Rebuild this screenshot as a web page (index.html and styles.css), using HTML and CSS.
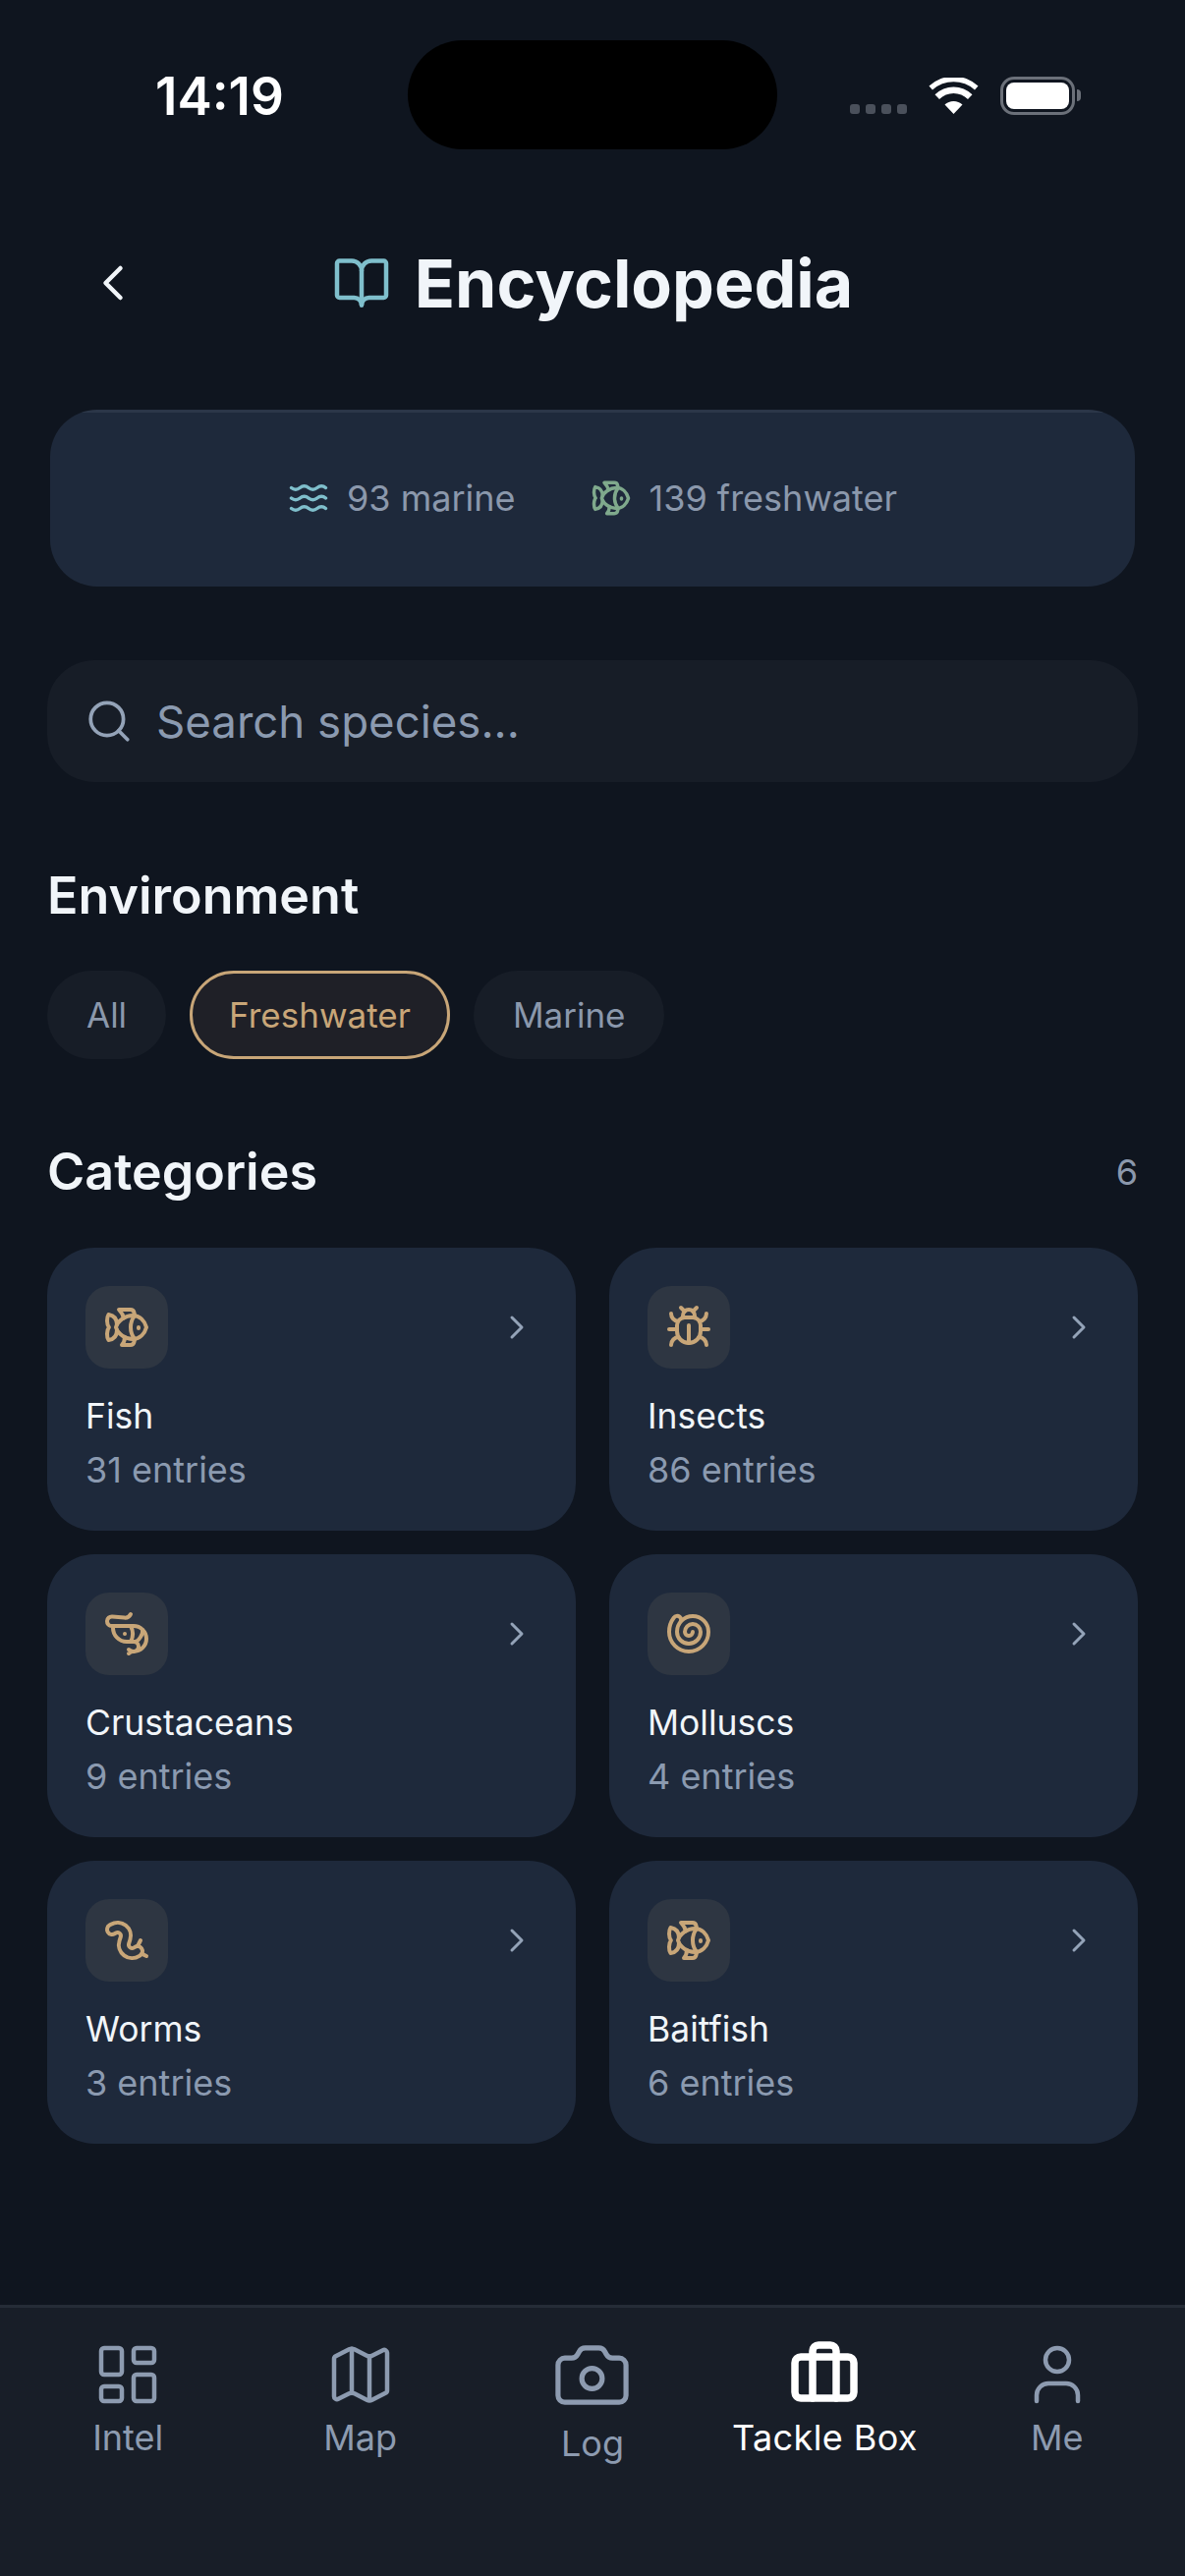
FILE: index.html
```html
<!DOCTYPE html>
<html lang="en">
<head>
    <meta charset="UTF-8">
    <meta name="viewport" content="width=device-width, initial-scale=1.0">
    <title>Encyclopedia</title>
    <link rel="stylesheet" href="styles.css">
</head>
<body>

<svg class="sprites" width="0" height="0">
    <symbol id="i-fish" viewBox="0 0 24 24">
        <path d="M6.5 12c.94-3.46 4.94-6 8.5-6 3.56 0 6.06 2.54 7 6-.94 3.47-3.44 6-7 6s-7.56-2.53-8.5-6Z"/>
        <path d="M18 12v.5"/>
        <path d="M16 17.93a9.77 9.77 0 0 1 0-11.86"/>
        <path d="M7 10.67C7 8 5.58 5.97 2.73 5.5c-1 1.5-1 5 .23 6.5-1.24 1.5-1.24 5-.23 6.5C5.58 18.03 7 16 7 13.33"/>
        <path d="M10.46 7.26C10.2 5.88 9.17 4.24 8 3h5.8a2 2 0 0 1 1.98 1.67l.23 1.4"/>
        <path d="m16.01 17.93-.23 1.4A2 2 0 0 1 13.8 21H9.5a5.96 5.96 0 0 0 1.49-3.98"/>
    </symbol>
    <symbol id="i-bug" viewBox="0 0 24 24">
        <path d="m8 2 1.88 1.88"/>
        <path d="M14.12 3.88 16 2"/>
        <path d="M9 7.13v-1a3.003 3.003 0 1 1 6 0v1"/>
        <path d="M12 20c-3.3 0-6-2.7-6-6v-3a4 4 0 0 1 4-4h4a4 4 0 0 1 4 4v3c0 3.3-2.7 6-6 6"/>
        <path d="M12 20v-9"/>
        <path d="M6.53 9C4.6 8.8 3 7.1 3 5"/>
        <path d="M6 13H2"/>
        <path d="M3 21c0-2.1 1.7-3.9 3.8-4"/>
        <path d="M20.97 5c0 2.1-1.6 3.8-3.5 4"/>
        <path d="M22 13h-4"/>
        <path d="M17.2 17c2.1.1 3.8 1.9 3.8 4"/>
    </symbol>
    <symbol id="i-shrimp" viewBox="0 0 24 24">
        <path d="M11 12h.01"/>
        <path d="M13 22c.5-.5 1.12-1 2.5-1-1.38 0-2-.5-2.5-1"/>
        <path d="M14 2a3.28 3.28 0 0 1-3.227 1.798l-6.17-.561A2.387 2.387 0 1 0 4.387 8H15.5a1 1 0 0 1 0 13 1 1 0 0 0 0-5H12a7 7 0 0 1-7-7V8"/>
        <path d="M14 8a8.5 8.5 0 0 1 0 8"/>
        <path d="M16 16c2 0 4.5-4 4-6"/>
    </symbol>
    <symbol id="i-shell" viewBox="0 0 24 24">
        <path d="M14 11a2 2 0 1 1-4 0 4 4 0 0 1 8 0 6 6 0 0 1-12 0 8 8 0 0 1 16 0 10 10 0 1 1-20 0 11.93 11.93 0 0 1 2.42-7.22 2 2 0 1 1 3.16 2.44"/>
    </symbol>
    <symbol id="i-worm" viewBox="0 0 24 24">
        <path d="m19 12-1.5 3"/>
        <path d="M19.63 18.81 22 20"/>
        <path d="M6.47 8.23a1.68 1.68 0 0 1 2.44 1.93l-.64 2.08a6.76 6.76 0 0 0 10.16 7.67l.42-.27a1 1 0 1 0-2.73-4.21l-.42.27a1.76 1.76 0 0 1-2.63-1.99l.64-2.08A6.66 6.66 0 0 0 3.94 3.9l-.7.4a1 1 0 1 0 2.55 4.34z"/>
    </symbol>
    <symbol id="i-chevron" viewBox="0 0 24 24">
        <path d="m9 18 6-6-6-6"/>
    </symbol>
</svg>

<div class="phone">
    <div class="status-bar">
        <div class="status-time">14:19</div>
        <div class="island"></div>
        <div class="status-icons">
            <div class="signal"><span></span><span></span><span></span><span></span></div>
            <svg class="wifi" viewBox="0 0 50 37">
                <path d="M25 37 16 27.500a13 13 0 0 1 18 0Z"/>
                <path d="M10.500 22 6 17.200a27 27 0 0 1 38 0L39.500 22a20.500 20.500 0 0 0-29 0Z"/>
                <path d="M3.500 12.500 0 8.500a37 37 0 0 1 50 0l-3.500 4a32 32 0 0 0-43 0Z"/>
            </svg>
            <div class="battery"><div class="battery-fill"></div></div>
            <div class="battery-cap"></div>
        </div>
    </div>

    <div class="content">
        <header class="page-header">
            <svg class="icon back" viewBox="0 0 24 24"><path d="m15 18-6-6 6-6"/></svg>
            <div class="page-title">
                <svg class="icon title-icon" viewBox="0 0 24 24">
                    <path d="M12 7v14"/>
                    <path d="M3 18a1 1 0 0 1-1-1V4a1 1 0 0 1 1-1h5a4 4 0 0 1 4 4 4 4 0 0 1 4-4h5a1 1 0 0 1 1 1v13a1 1 0 0 1-1 1h-6a3 3 0 0 0-3 3 3 3 0 0 0-3-3z"/>
                </svg>
                <h1>Encyclopedia</h1>
            </div>
        </header>

        <div class="stats-card">
            <div class="stat">
                <svg class="icon stat-icon marine" viewBox="0 0 24 24">
                    <path d="M2 6c.6.5 1.200 1 2.500 1C7 7 7 5 9.500 5c2.600 0 2.400 2 5 2 2.500 0 2.500-2 5-2 1.300 0 1.900.5 2.500 1"/>
                    <path d="M2 12c.6.5 1.200 1 2.500 1 2.500 0 2.500-2 5-2 2.600 0 2.400 2 5 2 2.500 0 2.500-2 5-2 1.300 0 1.900.5 2.500 1"/>
                    <path d="M2 18c.6.5 1.200 1 2.500 1 2.500 0 2.500-2 5-2 2.600 0 2.400 2 5 2 2.500 0 2.500-2 5-2 1.300 0 1.900.5 2.500 1"/>
                </svg>
                <span>93 marine</span>
            </div>
            <div class="stat">
                <svg class="icon stat-icon fresh"><use href="#i-fish"/></svg>
                <span>139 freshwater</span>
            </div>
        </div>

        <div class="search-box">
            <svg class="icon search-icon" viewBox="0 0 24 24">
                <circle cx="11" cy="11" r="8"/>
                <path d="m21 21-4.300-4.300"/>
            </svg>
            <span>Search species...</span>
        </div>

        <h2 class="section-title env-title">Environment</h2>
        <div class="pills">
            <div class="pill">All</div>
            <div class="pill active">Freshwater</div>
            <div class="pill">Marine</div>
        </div>

        <div class="section-head">
            <h2 class="section-title">Categories</h2>
            <span class="section-count">6</span>
        </div>

        <div class="cat-grid">
            <div class="cat-card">
                <div class="cat-top">
                    <div class="cat-tile"><svg class="icon cat-icon"><use href="#i-fish"/></svg></div>
                    <svg class="icon cat-chevron"><use href="#i-chevron"/></svg>
                </div>
                <div class="cat-name">Fish</div>
                <div class="cat-count">31 entries</div>
            </div>
            <div class="cat-card">
                <div class="cat-top">
                    <div class="cat-tile"><svg class="icon cat-icon"><use href="#i-bug"/></svg></div>
                    <svg class="icon cat-chevron"><use href="#i-chevron"/></svg>
                </div>
                <div class="cat-name">Insects</div>
                <div class="cat-count">86 entries</div>
            </div>
            <div class="cat-card">
                <div class="cat-top">
                    <div class="cat-tile"><svg class="icon cat-icon"><use href="#i-shrimp"/></svg></div>
                    <svg class="icon cat-chevron"><use href="#i-chevron"/></svg>
                </div>
                <div class="cat-name">Crustaceans</div>
                <div class="cat-count">9 entries</div>
            </div>
            <div class="cat-card">
                <div class="cat-top">
                    <div class="cat-tile"><svg class="icon cat-icon"><use href="#i-shell"/></svg></div>
                    <svg class="icon cat-chevron"><use href="#i-chevron"/></svg>
                </div>
                <div class="cat-name">Molluscs</div>
                <div class="cat-count">4 entries</div>
            </div>
            <div class="cat-card">
                <div class="cat-top">
                    <div class="cat-tile"><svg class="icon cat-icon"><use href="#i-worm"/></svg></div>
                    <svg class="icon cat-chevron"><use href="#i-chevron"/></svg>
                </div>
                <div class="cat-name">Worms</div>
                <div class="cat-count">3 entries</div>
            </div>
            <div class="cat-card">
                <div class="cat-top">
                    <div class="cat-tile"><svg class="icon cat-icon"><use href="#i-fish"/></svg></div>
                    <svg class="icon cat-chevron"><use href="#i-chevron"/></svg>
                </div>
                <div class="cat-name">Baitfish</div>
                <div class="cat-count">6 entries</div>
            </div>
        </div>
    </div>

    <nav class="tab-bar">
        <div class="tab">
            <svg class="icon tab-icon" viewBox="0 0 24 24">
                <rect x="3" y="3" width="7" height="9" rx="1"/>
                <rect x="14" y="3" width="7" height="5" rx="1"/>
                <rect x="14" y="12" width="7" height="9" rx="1"/>
                <rect x="3" y="16" width="7" height="5" rx="1"/>
            </svg>
            <span>Intel</span>
        </div>
        <div class="tab">
            <svg class="icon tab-icon" viewBox="0 0 24 24">
                <path d="M14.106 5.553a2 2 0 0 0 1.788 0l3.659-1.830A1 1 0 0 1 21 4.619v12.764a1 1 0 0 1-.553.894l-4.553 2.277a2 2 0 0 1-1.788 0l-4.212-2.106a2 2 0 0 0-1.788 0l-3.659 1.830A1 1 0 0 1 3 19.381V6.618a1 1 0 0 1 .553-.894l4.553-2.277a2 2 0 0 1 1.788 0z"/>
                <path d="M15 5.764v15"/>
                <path d="M9 3.236v15"/>
            </svg>
            <span>Map</span>
        </div>
        <div class="tab">
            <svg class="icon tab-icon tab-icon-big" viewBox="0 0 24 24">
                <path d="M13.997 4a2 2 0 0 1 1.760 1.050l.486.9A2 2 0 0 0 18.003 7H20a2 2 0 0 1 2 2v9a2 2 0 0 1-2 2H4a2 2 0 0 1-2-2V9a2 2 0 0 1 2-2h1.997a2 2 0 0 0 1.759-1.048l.489-.904A2 2 0 0 1 10.004 4z"/>
                <circle cx="12" cy="13" r="3"/>
            </svg>
            <span>Log</span>
        </div>
        <div class="tab active">
            <svg class="icon tab-icon" viewBox="0 0 24 24">
                <path d="M16 20V4a2 2 0 0 0-2-2h-4a2 2 0 0 0-2 2v16"/>
                <rect x="2" y="6" width="20" height="14" rx="2"/>
            </svg>
            <span>Tackle Box</span>
        </div>
        <div class="tab">
            <svg class="icon tab-icon" viewBox="0 0 24 24">
                <path d="M19 21v-2a4 4 0 0 0-4-4H9a4 4 0 0 0-4 4v2"/>
                <circle cx="12" cy="7" r="4"/>
            </svg>
            <span>Me</span>
        </div>
    </nav>
</div>

</body>
</html>
```

FILE: styles.css
```css
* {
    box-sizing: border-box;
}

body {
    margin: 0;
    padding: 0;
    background-color: #0f151f;
    font-family: Inter, "Noto Sans", sans-serif;
    color: #f1f5f9;
}

.sprites {
    display: block;
    height: 0;
}

.phone {
    width: 1206px;
    height: 2622px;
    display: flex;
    flex-direction: column;
    overflow: hidden;
}

.icon {
    fill: none;
    stroke: currentColor;
    stroke-width: 2;
    stroke-linecap: round;
    stroke-linejoin: round;
    flex: none;
}

/* status bar */
.status-bar {
    display: grid;
    grid-template-columns: 415px 376px 415px;
    padding-top: 41px;
    height: 152px;
}

.status-time {
    padding-left: 158px;
    font-size: 53px;
    font-weight: 600;
    line-height: 60px;
    color: #fff;
    margin-top: 27px;
}

.island {
    height: 111px;
    background-color: #000;
    border-radius: 56px;
}

.status-icons {
    display: flex;
    align-items: flex-start;
    padding: 38px 0 0 74px;
}

.signal {
    display: flex;
    gap: 6px;
    margin: 27px 22px 0 0;
}

.signal span {
    width: 10px;
    height: 10px;
    border-radius: 3px;
    background-color: #4a505b;
}

.wifi {
    width: 51px;
    height: 37px;
    fill: #fff;
    margin-right: 22px;
}

.battery {
    width: 76px;
    height: 39px;
    margin-top: -1px;
    padding: 3px;
    border: 3px solid #6b7079;
    border-radius: 14px;
}

.battery-fill {
    width: 100%;
    height: 100%;
    background-color: #fff;
    border-radius: 8px;
}

.battery-cap {
    width: 4px;
    height: 12px;
    margin: 12px 0 0 2px;
    background-color: #6b7079;
    border-radius: 0 4px 4px 0;
}

/* main content */
.content {
    flex: 1;
    padding: 0 48px;
}

.page-header {
    display: grid;
    grid-template-columns: 1fr auto 1fr;
    align-items: center;
    height: 96px;
    margin-top: 88px;
}

.back {
    width: 60px;
    height: 60px;
    margin-left: 37px;
    color: #f1f5f9;
    stroke-width: 1.8;
}

.page-title {
    display: flex;
    align-items: center;
    gap: 24px;
}

.title-icon {
    width: 60px;
    height: 60px;
    color: #7fbfcc;
    stroke-width: 1.8;
}

h1 {
    margin: 0;
    font-size: 68px;
    font-weight: 700;
    line-height: 80px;
}

.stats-card {
    display: flex;
    justify-content: center;
    align-items: center;
    gap: 76px;
    height: 180px;
    margin: 81px 3px 0;
    background: linear-gradient(#2b3648 3px, #1e293b 3px);
    border-radius: 48px;
}

.stat {
    display: flex;
    align-items: center;
    gap: 18px;
    font-size: 36px;
    color: #8b98ac;
}

.stat-icon {
    width: 42px;
    height: 42px;
}

.stat-icon.marine {
    color: #7fbfcc;
}

.stat-icon.fresh {
    color: #7fa98c;
}

.search-box {
    display: flex;
    align-items: center;
    gap: 23px;
    height: 124px;
    margin-top: 75px;
    padding-left: 38px;
    background-color: #171d27;
    border-radius: 48px;
    font-size: 45.6px;
    color: #8b9ab0;
}

.search-icon {
    width: 50px;
    height: 50px;
    color: #94a3b8;
    stroke-width: 1.8;
}

.section-title {
    margin: 0;
    font-size: 52px;
    font-weight: 600;
    line-height: 64px;
}

.env-title {
    margin-top: 84px;
}

.pills {
    display: flex;
    gap: 24px;
    margin-top: 44px;
}

.pill {
    display: flex;
    align-items: center;
    height: 90px;
    padding: 0 40px;
    background-color: #171d27;
    border-radius: 45px;
    font-size: 35px;
    color: #8b98ac;
}

.pill.active {
    background-color: #1f2027;
    border: 3px solid #c8a678;
    padding: 0 37px;
    color: #c8a678;
}

.section-head {
    display: flex;
    justify-content: space-between;
    align-items: center;
    margin-top: 83px;
}

.section-count {
    font-size: 36px;
    color: #8b98ac;
}

.cat-grid {
    display: grid;
    grid-template-columns: 538px 538px;
    grid-auto-rows: 288px;
    column-gap: 34px;
    row-gap: 24px;
    margin-top: 45px;
}

.cat-card {
    padding: 39px 39px 0;
    background-color: #1e293b;
    border-radius: 48px;
}

.cat-top {
    display: flex;
    justify-content: space-between;
    align-items: center;
    margin-bottom: 27px;
}

.cat-tile {
    display: flex;
    justify-content: center;
    align-items: center;
    width: 84px;
    height: 84px;
    background-color: #2e3642;
    border-radius: 24px;
}

.cat-icon {
    width: 48px;
    height: 48px;
    color: #c8a678;
}

.cat-chevron {
    width: 40px;
    height: 40px;
    color: #94a3b8;
    margin-right: 1px;
    stroke-width: 1.8;
}

.cat-name {
    font-size: 35.5px;
    line-height: 44px;
    color: #f1f5f9;
}

.cat-count {
    margin-top: 10px;
    font-size: 36px;
    line-height: 44px;
    color: #8b9ab0;
}

/* bottom tabs */
.tab-bar {
    display: grid;
    grid-template-columns: repeat(5, 1fr);
    align-items: center;
    height: 276px;
    padding: 3px 12px 90px;
    background-color: #181e28;
    border-top: 3px solid #252c37;
}

.tab {
    display: flex;
    flex-direction: column;
    align-items: center;
    gap: 6px;
    font-size: 36px;
    line-height: 44px;
    color: #8d9bb0;
}

.tab-icon {
    width: 72px;
    height: 72px;
    stroke-width: 1.5;
}

.tab-icon-big {
    width: 83px;
    height: 83px;
}

.tab.active {
    color: #fff;
    letter-spacing: 0.4px;
}

.tab.active .tab-icon {
    stroke-width: 2.5;
}
```
